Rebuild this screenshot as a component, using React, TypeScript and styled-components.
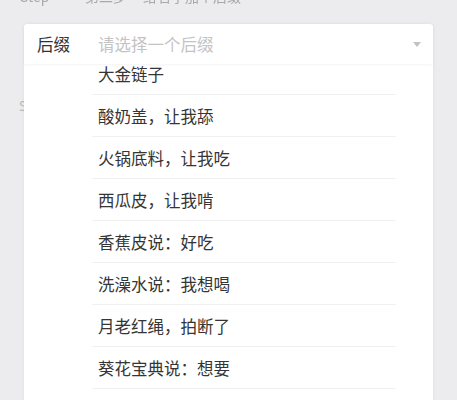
import React from 'react';
import styled, { createGlobalStyle } from 'styled-components';

const GlobalStyle = createGlobalStyle`
  html, body {
    margin: 0;
    padding: 0;
    background: #ececee;
    font-family: "Noto Sans CJK SC", "Noto Sans", sans-serif;
  }
`;

const Page = styled.div`
  position: relative;
  width: 457px;
  height: 400px;
  overflow: hidden;
  background: #ececee;
`;

// faded step header, mostly scrolled off the top
const StepBar = styled.div`
  display: flex;
  gap: 16px;
  padding-left: 20px;
  margin-top: -13px;
  height: 18px;
  font-size: 14px;
  line-height: 18px;
  color: #a9a9ab;
  filter: blur(0.6px);
`;

const StepText = styled.span<{ $w?: number }>`
  display: inline-block;
  white-space: nowrap;
  width: ${(p) => (p.$w ? `${p.$w}px` : 'auto')};
`;

const BehindRow = styled.div`
  padding: 90px 0 0 19px;
  font-family: "Noto Sans", sans-serif;
  font-size: 15px;
  color: #bdbdbf;
`;

const Popup = styled.div`
  position: absolute;
  left: 24px;
  top: 24px;
  width: 409px;
  bottom: 0;
  display: flex;
  flex-direction: column;
  background: #fff;
  border-radius: 4px 4px 0 0;
  box-shadow: 0 0 4px rgba(0, 0, 0, 0.06);
`;

const Header = styled.div`
  position: relative;
  z-index: 1;
  display: flex;
  align-items: center;
  height: 40px;
  padding: 0 12px 0 13px;
  background: #fff;
  border-radius: 4px 4px 0 0;
  box-shadow: 0 1px 3px rgba(0, 0, 0, 0.05);
`;

const Label = styled.span`
  width: 61px;
  font-size: 16.5px;
  color: #333;
`;

const Placeholder = styled.span`
  flex: 1;
  font-size: 16.5px;
  color: #c4c4c4;
`;

const Caret = styled.span`
  width: 0;
  height: 0;
  border-left: 4.5px solid transparent;
  border-right: 4.5px solid transparent;
  border-top: 5px solid #c2c2c2;
  margin-top: 1px;
`;

const ListWindow = styled.div`
  flex: 1;
  overflow: hidden;
`;

const List = styled.ul`
  list-style: none;
  margin: -11px 37px 0 68px;
  padding: 0;
`;

const Item = styled.li`
  height: 41px;
  display: flex;
  align-items: center;
  padding-left: 6px;
  border-bottom: 1px solid #f0f0f0;
  font-size: 16.5px;
  color: #353535;
`;

const options = [
  '大金链子',
  '酸奶盖，让我舔',
  '火锅底料，让我吃',
  '西瓜皮，让我啃',
  '香蕉皮说：好吃',
  '洗澡水说：我想喝',
  '月老红绳，拍断了',
  '葵花宝典说：想要',
];

export default function App() {
  return (
    <Page>
      <GlobalStyle />
      <StepBar>
        <StepText $w={49}>Step</StepText>
        <StepText $w={42}>第二步</StepText>
        <StepText>给名字加个后缀</StepText>
      </StepBar>
      <BehindRow>S</BehindRow>
      <Popup>
        <Header>
          <Label>后缀</Label>
          <Placeholder>请选择一个后缀</Placeholder>
          <Caret />
        </Header>
        <ListWindow>
          <List>
            {options.map((o) => (
              <Item key={o}>{o}</Item>
            ))}
          </List>
        </ListWindow>
      </Popup>
    </Page>
  );
}
